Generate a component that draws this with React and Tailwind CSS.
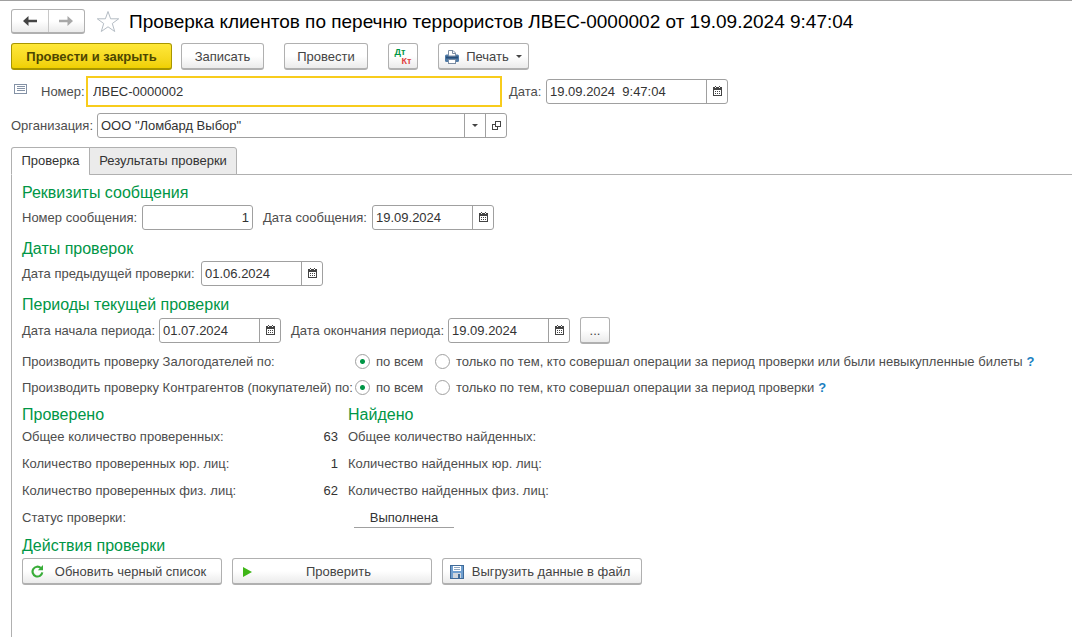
import React, { useState } from 'react';
import clsx from 'clsx';

const CalendarIcon = () => (
  <svg width="9" height="10" viewBox="0 0 9 10" shapeRendering="crispEdges" className="mb-0.5 shrink-0" aria-hidden="true">
    <path d="M0 1h9v9H0z M1 4v5h7V4z" fill="#444" fillRule="evenodd" />
    <path d="M2 0h1v1H2z M6 0h1v1H6z" fill="#444" />
    <path d="M2 1h1v1H2z M6 1h1v1H6z" fill="#fff" />
    <path d="M2 5h1v1H2z M4 5h1v1H4z M6 5h1v1H6z M2 7h1v1H2z M4 7h1v1H4z M6 7h1v1H6z" fill="#444" />
  </svg>
);

const ArrowIcon = ({ right, color }) => (
  <svg width="14" height="10" viewBox="0 0 14 10" className={right ? 'rotate-180' : ''} aria-hidden="true">
    <path d="M0 5 5.5 0v3.7H14v2.6H5.5V10z" fill={color} />
  </svg>
);

const StarIcon = () => (
  <svg width="24" height="23" viewBox="0 0 24 23" fill="none" stroke="#b4bcc4" aria-hidden="true">
    <path d="M12 1.5 14.6 8.8H22.7L16.3 13.5 18.7 21.5 12 16.8 5.3 21.5 7.7 13.5 1.3 8.8H9.4z" />
  </svg>
);

const ListIcon = () => (
  <svg width="13" height="10" viewBox="0 0 13 10" shapeRendering="crispEdges" className="mb-1.5 shrink-0" aria-hidden="true">
    <rect x="0.5" y="0.5" width="12" height="9" fill="#fff" stroke="#8492a6" />
    <path d="M3 2h8v1H3z M3 4h8v1H3z M3 6h8v1H3z" fill="#8492a6" />
  </svg>
);

const PrinterIcon = () => (
  <svg width="14" height="14" viewBox="0 0 14 14" aria-hidden="true">
    <rect x="0" y="4.5" width="14" height="7.5" rx="1.5" fill="#4f7aa6" />
    <path d="M1 6.5h12v2H1z" fill="#274d78" />
    <path d="M3.5 6V.5H8L10.5 3v3z" fill="#fff" stroke="#7a8ca3" />
    <path d="M7.5.5V3.5h3" fill="none" stroke="#7a8ca3" />
    <rect x="3.5" y="9.5" width="7" height="4" fill="#fff" stroke="#7a8ca3" />
  </svg>
);

const OpenIcon = () => (
  <svg width="9" height="9" viewBox="0 0 9 9" fill="none" stroke="#444" shapeRendering="crispEdges" aria-hidden="true">
    <path d="M3.5 0.5h5v5h-5z M3.5 3.5h-3v5h5v-3" />
  </svg>
);

const CaretIcon = () => (
  <svg width="6" height="3" viewBox="0 0 6 3" aria-hidden="true">
    <path d="M0 0h6L3 3z" fill="#444" />
  </svg>
);

const RefreshIcon = () => (
  <svg width="13" height="13" viewBox="0 0 13 13" aria-hidden="true">
    <path d="M9.8 3A4.9 4.9 0 1 0 11.3 7.4" fill="none" stroke="#39ad39" strokeWidth="2.2" />
    <path d="M12 0v5.2H6.8z" fill="#39ad39" />
  </svg>
);

const PlayIcon = () => (
  <svg width="9" height="10" viewBox="0 0 9 10" aria-hidden="true">
    <path d="M0 0 9 5 0 10z" fill="#3fb618" />
  </svg>
);

const FloppyIcon = () => (
  <svg width="14" height="14" viewBox="0 0 14 14" shapeRendering="crispEdges" aria-hidden="true">
    <rect x="0.5" y="0.5" width="13" height="13" fill="#6f9fd0" stroke="#3f6a98" />
    <path d="M3 1h8v5H3z" fill="#fff" />
    <path d="M4 2h6v1H4z M4 4h6v1H4z" fill="#8fa6bf" />
    <path d="M3 8h8v5H3z" fill="#cfd6dd" />
    <path d="M8 9h2v4H8z" fill="#3f6a98" />
  </svg>
);

const Button = ({ className, primary, children, ...props }) => (
  <button
    type="button"
    className={clsx(
      'flex h-[27px] shrink-0 items-center justify-center rounded-[3px] border border-b-2 pt-px whitespace-nowrap',
      primary
        ? 'border-[#a89600] bg-linear-to-b from-[#ffe838] to-[#f0d000] font-bold text-[#4d4600]'
        : 'border-[#b0b0b0] bg-linear-to-b from-white from-50% to-[#ebebeb] text-[#444]',
      className
    )}
    {...props}
  >
    {children}
  </button>
);

const Heading = ({ children }) => (
  <h2 className="pt-px text-base leading-6 whitespace-nowrap text-[#009646]">{children}</h2>
);

const fieldBox = 'flex h-[25px] shrink-0 overflow-hidden rounded-[3px] border border-[#a0a0a0] bg-white';
const fieldInput = 'min-w-0 flex-1 px-[3px] text-[#333] outline-none';
const fieldButton = 'flex w-[21px] shrink-0 items-center justify-center border-l border-[#a0a0a0]';

const DateField = ({ id, label, labelClass, value, width = 'w-[122px]' }) => {
  const [date, setDate] = useState(value);
  return (
    <div className="flex items-center">
      <label htmlFor={id} className={clsx('shrink-0 whitespace-nowrap', labelClass)}>{label}</label>
      <div className={clsx(fieldBox, width)}>
        <input id={id} type="text" className={clsx(fieldInput, 'whitespace-pre')} value={date} onChange={(e) => setDate(e.target.value)} />
        <button type="button" aria-label="Выбрать дату" className={fieldButton}>
          <CalendarIcon />
        </button>
      </div>
    </div>
  );
};

const RadioRow = ({ name, label, option }) => {
  const [mode, setMode] = useState('all');
  const radio = 'size-[15px] shrink-0 appearance-none rounded-full border border-[#a0a0a0] bg-white checked:bg-[radial-gradient(circle,#009646_2px,white_3px)]';
  return (
    <div role="radiogroup" aria-label={label} className="flex h-[26px] items-center pt-px whitespace-nowrap">
      <span className="w-[333px] shrink-0">{label}</span>
      <label className="flex w-20 shrink-0 items-center gap-1.5">
        <input type="radio" name={name} className={radio} checked={mode === 'all'} onChange={() => setMode('all')} />
        по всем
      </label>
      <label className="flex items-center gap-1.5">
        <input type="radio" name={name} className={radio} checked={mode === 'period'} onChange={() => setMode('period')} />
        {option}
      </label>
      <button type="button" className="ml-1 font-bold text-[#1a7fc1]">?</button>
    </div>
  );
};

const checked = [
  ['Общее количество проверенных:', 63],
  ['Количество проверенных юр. лиц:', 1],
  ['Количество проверенных физ. лиц:', 62],
];

const found = [
  'Общее количество найденных:',
  'Количество найденных юр. лиц:',
  'Количество найденных физ. лиц:',
];

const App = () => {
  const [tab, setTab] = useState('check');
  const [number, setNumber] = useState('ЛВЕС-0000002');
  const [organization, setOrganization] = useState('ООО "Ломбард Выбор"');
  const [messageNumber, setMessageNumber] = useState('1');

  const tabClass = (id) =>
    clsx(
      'h-[28px] border border-[#b0b0b0] text-[#333] whitespace-nowrap',
      tab === id ? 'border-b-white bg-white' : 'bg-[#ebebeb]'
    );

  return (
    <div className="flex min-h-screen flex-col border-t border-[#a0a0a0] bg-white font-['Liberation_Sans',Arial,sans-serif] text-[13px] leading-5 text-[#4d4d4d]">
      {/* Title */}
      <header className="flex items-center pt-2 pl-[11px]">
        <div className="flex h-[25px] w-[74px] shrink-0 rounded-[3px] border border-b-2 border-[#b0b0b0] bg-linear-to-b from-white from-50% to-[#ebebeb]">
          <button type="button" aria-label="Назад" className="flex flex-1 items-center justify-center">
            <ArrowIcon color="#444" />
          </button>
          <button type="button" aria-label="Вперед" className="flex flex-1 items-center justify-center border-l border-[#c8c8c8]">
            <ArrowIcon right color="#a8a8a8" />
          </button>
        </div>
        <button type="button" aria-label="В избранное" className="ml-[11px] shrink-0">
          <StarIcon />
        </button>
        <h1 className="ml-[9px] text-[19px] leading-6 whitespace-nowrap text-black">
          Проверка клиентов по перечню террористов ЛВЕС-0000002 от 19.09.2024 9:47:04
        </h1>
      </header>

      {/* Command bar */}
      <div className="mt-[9px] flex pl-[11px]">
        <Button primary className="w-[161px]">Провести и закрыть</Button>
        <Button className="ml-[9px] w-[83px]">Записать</Button>
        <Button className="ml-5 w-[84px]">Провести</Button>
        <Button className="ml-5 w-[30px]" aria-label="Дт/Кт">
          <span className="flex w-[17px] flex-col text-[9px] leading-[9px] font-bold">
            <span className="text-left text-[#009646]">Дт</span>
            <span className="text-right text-[#e04040]">Кт</span>
          </span>
        </Button>
        <Button className="ml-5 w-[91px] gap-[7px]">
          <PrinterIcon />
          Печать
          <CaretIcon />
        </Button>
      </div>

      {/* Document fields */}
      <div className="mt-1.5 flex items-center pl-[14px]">
        <ListIcon />
        <label htmlFor="number" className="ml-[14px] w-[45px] shrink-0">Номер:</label>
        <input
          id="number"
          type="text"
          className="h-[31px] w-[416px] border-2 border-[#f8cc1c] px-[5px] text-[#333] outline-none"
          value={number}
          onChange={(e) => setNumber(e.target.value)}
        />
        <div className="ml-[7px]">
          <DateField id="date" label="Дата:" labelClass="w-[37px]" value="19.09.2024  9:47:04" width="w-[182px]" />
        </div>
      </div>
      <div className="mt-1.5 flex items-center pl-[11px]">
        <label htmlFor="organization" className="w-[86px] shrink-0">Организация:</label>
        <div className={clsx(fieldBox, 'w-[410px]')}>
          <input
            id="organization"
            type="text"
            className={fieldInput}
            value={organization}
            onChange={(e) => setOrganization(e.target.value)}
          />
          <button type="button" aria-label="Выбрать" className={fieldButton}>
            <CaretIcon />
          </button>
          <button type="button" aria-label="Открыть" className={fieldButton}>
            <OpenIcon />
          </button>
        </div>
      </div>

      {/* Tabs */}
      <div className="mt-[9px] ml-[11px] flex border-b border-[#b0b0b0]" role="tablist">
        <button type="button" role="tab" aria-selected={tab === 'check'} className={clsx(tabClass('check'), '-mb-px w-[79px] rounded-tl-[3px]')} onClick={() => setTab('check')}>
          Проверка
        </button>
        <button type="button" role="tab" aria-selected={tab === 'results'} className={clsx(tabClass('results'), '-mb-px -ml-px w-[148px] rounded-tr-[3px]')} onClick={() => setTab('results')}>
          Результаты проверки
        </button>
      </div>

      <main className="ml-[11px] flex-1 border-l border-[#b0b0b0] pt-[5px] pl-2.5">
        <Heading>Реквизиты сообщения</Heading>
        <div className="flex items-center gap-2.5">
          <div className="flex items-center">
            <label htmlFor="message-number" className="w-[120px] shrink-0 whitespace-nowrap">Номер сообщения:</label>
            <div className={clsx(fieldBox, 'w-[111px]')}>
              <input
                id="message-number"
                type="text"
                className={clsx(fieldInput, 'text-right')}
                value={messageNumber}
                onChange={(e) => setMessageNumber(e.target.value)}
              />
            </div>
          </div>
          <DateField id="message-date" label="Дата сообщения:" labelClass="w-[109px]" value="19.09.2024" />
        </div>

        <div className="mt-1.5">
          <Heading>Даты проверок</Heading>
          <DateField id="previous-date" label="Дата предыдущей проверки:" labelClass="w-[179px]" value="01.06.2024" />
        </div>

        <div className="mt-1.5">
          <Heading>Периоды текущей проверки</Heading>
          <div className="flex items-center gap-2.5">
            <DateField id="period-start" label="Дата начала периода:" labelClass="w-[137px]" value="01.07.2024" />
            <DateField id="period-end" label="Дата окончания периода:" labelClass="w-[157px]" value="19.09.2024" />
            <Button className="w-[30px]">...</Button>
          </div>
        </div>

        <div className="mt-1">
          <RadioRow
            name="pledgers"
            label="Производить проверку Залогодателей по:"
            option="только по тем, кто совершал операции за период проверки или были невыкупленные билеты"
          />
          <RadioRow
            name="contractors"
            label="Производить проверку Контрагентов (покупателей) по:"
            option="только по тем, кто совершал операции за период проверки"
          />
        </div>

        {/* Totals */}
        <div className="mt-0.5 flex gap-2.5">
          <section className="w-[316px]">
            <Heading>Проверено</Heading>
            <dl className="flex flex-col gap-[7px]">
              {checked.map(([label, value]) => (
                <div key={label} className="flex justify-between">
                  <dt>{label}</dt>
                  <dd className="text-[#333]">{value}</dd>
                </div>
              ))}
            </dl>
          </section>
          <section>
            <Heading>Найдено</Heading>
            <ul className="flex flex-col gap-[7px]">
              {found.map((label) => (
                <li key={label}>{label}</li>
              ))}
            </ul>
          </section>
        </div>
        <div className="mt-2 flex leading-[18px]">
          <span className="w-[332px]">Статус проверки:</span>
          <span className="w-[100px] border-b border-[#a0a0a0] text-center text-[#333]">Выполнена</span>
        </div>

        <div className="mt-[5px]">
          <Heading>Действия проверки</Heading>
          <div className="flex gap-2.5">
            <Button className="w-[200px] gap-1 px-2">
              <RefreshIcon />
              <span className="flex-1 text-center">Обновить черный список</span>
            </Button>
            <Button className="w-[200px] gap-1 px-2.5">
              <PlayIcon />
              <span className="flex-1 text-center">Проверить</span>
            </Button>
            <Button className="w-[200px] gap-1 px-[7px]">
              <FloppyIcon />
              <span className="flex-1 text-center">Выгрузить данные в файл</span>
            </Button>
          </div>
        </div>
      </main>
    </div>
  );
};

export default App;
